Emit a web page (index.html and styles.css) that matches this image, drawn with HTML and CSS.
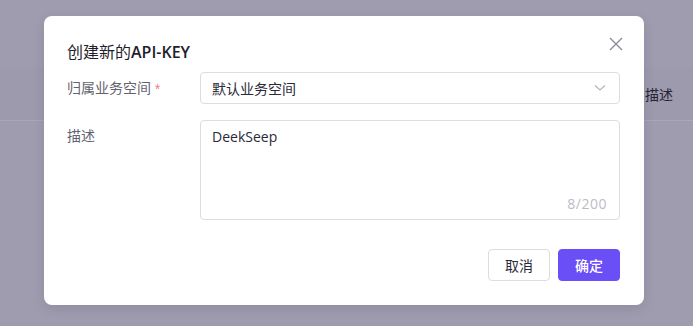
FILE: index.html
```html
<!DOCTYPE html>
<html>
<head>
  <title>创建新的API-KEY</title>
  <link rel="stylesheet" href="styles.css">
</head>
<body>
  <div class="page">
    <div class="table-head">
      <span class="col-desc">描述</span>
    </div>
  </div>

  <div class="modal">
    <h2 class="modal-title">创建新的<b>API-KEY</b></h2>
    <svg class="close" width="14" height="14" viewBox="0 0 14 14">
      <path d="M1 1 L13 13 M13 1 L1 13" stroke="#8a8a96" stroke-width="1.3" fill="none"/>
    </svg>

    <div class="form">
      <div class="form-row">
        <label class="label">归属业务空间 <span class="req">*</span></label>
        <div class="select">
          <span>默认业务空间</span>
          <svg width="12" height="8" viewBox="0 0 12 8">
            <path d="M1 1.5 L6 6 L11 1.5" stroke="#b4b4bc" stroke-width="1.2" fill="none"/>
          </svg>
        </div>
      </div>
      <div class="form-row">
        <label class="label">描述</label>
        <div class="textarea">
          <div class="ta-text">DeekSeep</div>
          <div class="count">8/200</div>
        </div>
      </div>
    </div>

    <div class="footer">
      <button class="btn">取消</button>
      <button class="btn primary">确定</button>
    </div>
  </div>
</body>
</html>
```

FILE: styles.css
```css
body {
  margin: 0;
  background: #9e9cae;
  font-family: "Open Sans", "Noto Sans CJK SC", sans-serif;
  width: 693px;
  height: 326px;
  overflow: hidden;
}

.page {
  padding-top: 67px;
}

.table-head {
  height: 53px;
  background: #9c9aac;
  border-bottom: 1px solid #a9a7b8;
  display: flex;
  align-items: center;
  padding-left: 645px;
}

.col-desc {
  font-size: 14px;
  color: #262436;
}

.modal {
  position: absolute;
  left: 44px;
  top: 16px;
  width: 600px;
  height: 289px;
  box-sizing: border-box;
  background: #fff;
  border-radius: 8px;
  padding: 24px 24px 24px 23px;
  box-shadow: 0 4px 12px rgba(40, 36, 70, 0.12);
}

.modal-title {
  margin: 0;
  font-size: 16px;
  line-height: 24px;
  font-weight: 400;
  color: #1f1e2d;
}

.modal-title b {
  font-weight: 600;
}

.close {
  position: absolute;
  top: 21px;
  right: 21px;
}

.form {
  margin-top: 8px;
  display: flex;
  flex-direction: column;
  gap: 16px;
}

.form-row {
  display: flex;
}

.label {
  width: 133px;
  flex: none;
  font-size: 14px;
  line-height: 32px;
  color: #63626f;
}

.req {
  color: #f26b7e;
  font-size: 10px;
  vertical-align: top;
}

.select {
  flex: 1;
  height: 32px;
  box-sizing: border-box;
  border: 1px solid #dcdce2;
  border-radius: 4px;
  display: flex;
  align-items: center;
  justify-content: space-between;
  padding: 0 13px 0 11px;
  font-size: 14px;
  color: #2a2938;
}

.textarea {
  flex: 1;
  height: 100px;
  box-sizing: border-box;
  border: 1px solid #dcdce2;
  border-radius: 4px;
  padding: 5px 12px 4px 11px;
  display: flex;
  flex-direction: column;
  justify-content: space-between;
  font-size: 14px;
  line-height: 22px;
}

.ta-text {
  color: #2a2938;
}

.count {
  text-align: right;
  color: #bcbbc5;
  letter-spacing: 0.5px;
}

.footer {
  margin-top: 29px;
  display: flex;
  justify-content: flex-end;
  gap: 8px;
}

.btn {
  width: 62px;
  height: 32px;
  font-family: "Open Sans", "Noto Sans CJK SC", sans-serif;
  font-size: 14px;
  border: 1px solid #dcdce2;
  border-radius: 4px;
  background: #fff;
  color: #2a2938;
  padding: 0;
}

.btn.primary {
  background: #6a4ef6;
  border-color: #6a4ef6;
  color: #fff;
  font-weight: 500;
}
```
